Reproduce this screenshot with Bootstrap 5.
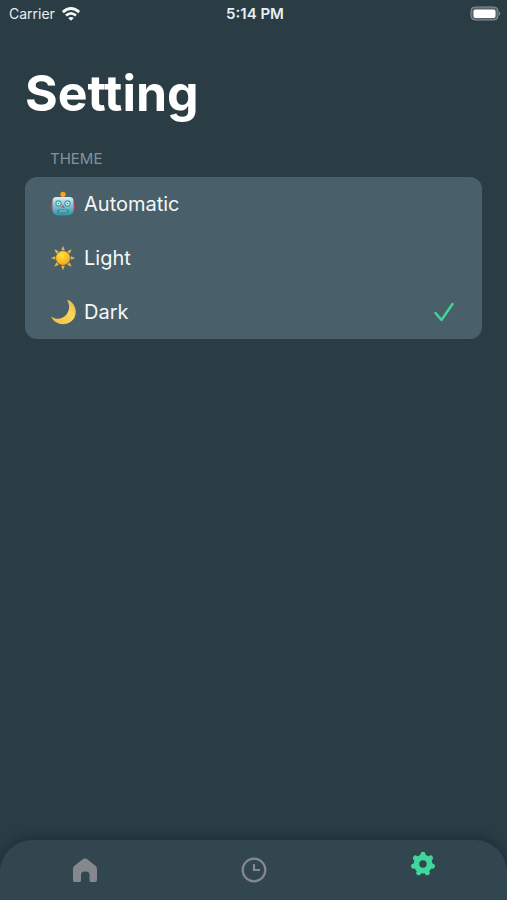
<!DOCTYPE html>
<html lang="en">
<head>
<meta charset="utf-8">
<meta name="viewport" content="width=device-width, initial-scale=1">
<title>Setting</title>
<link href="https://cdn.jsdelivr.net/npm/bootstrap@5.3.0/dist/css/bootstrap.min.css" rel="stylesheet">
<style>
body { background: #2a3d45; color: #fff; font-family: Inter, "Liberation Sans", sans-serif; }
svg { display: block; flex-shrink: 0; }
.status { height: 28px; padding: 0 6px 0 9px; font-size: 14px; line-height: 28px; color: #e9eff1; }
.status > * { flex: 1 1 0; }
.carrier { gap: 6px; }
.clock { font-size: 15px; }
.page-title { font-size: 50px; line-height: 60px; font-weight: 700; margin: 0 0 26px; }
.page-body { padding: 35px 25px 0; }
.group-label { font-size: 15px; line-height: 20px; color: #85939a; padding-left: 25px; margin: 0 0 8px; float: none; }
.options { border-radius: 12px; background: #495f69; }
.option { height: 54px; padding: 0 28px 0 25px; font-size: 20px; color: #f3f7f9; background: transparent; gap: 8px; cursor: pointer; }
.option .tick { visibility: hidden; }
.option input:checked ~ .tick { visibility: visible; }
.tabs { height: 60px; border-radius: 32px 32px 0 0; background: #31464f; box-shadow: 0 -2px 12px rgba(10, 25, 35, .45); }
.tab { color: #85898f; }
.tab.active { color: #41d69b; padding-bottom: 12px; }
</style>
<script src="https://cdn.jsdelivr.net/npm/bootstrap@5.3.0/dist/js/bootstrap.bundle.min.js"></script>
</head>
<body class="d-flex flex-column min-vh-100">
<header class="status d-flex align-items-center">
  <div class="carrier d-flex align-items-center"><span>Carrier</span>
    <svg width="20" height="16" viewBox="0 0 20 16" fill="none" stroke="#f4f8f9" stroke-width="2.8" aria-label="Wi-Fi"><path d="M1.800 6.100Q10-1.200 18.200 6.100M5 9.500q5-4.300 10 0"/><path d="M10 14.700 7.200 12q2.800-2.200 5.600 0Z" fill="#f4f8f9" stroke="none"/></svg>
  </div>
  <div class="clock text-center fw-semibold">5:14 PM</div>
  <div class="d-flex justify-content-end">
    <svg width="31" height="16" viewBox="0 0 31 16" aria-label="Battery full"><rect x="1" y="1" width="27" height="13" rx="4" fill="#57656b" stroke="#849096"/><rect x="3.500" y="3.500" width="22" height="8.500" rx="2" fill="#fff"/><path d="M29 5.200q2.300 2.300 0 4.600Z" fill="#849096"/></svg>
  </div>
</header>
<main class="page-body flex-grow-1">
  <h1 class="page-title">Setting</h1>
  <fieldset>
    <legend class="group-label">THEME</legend>
    <div class="list-group options">
      <label class="list-group-item border-0 option d-flex align-items-center">
        <input class="visually-hidden" type="radio" name="theme" value="automatic">
        <svg width="26" height="26" viewBox="0 0 26 26"><defs><linearGradient id="face" x1="0" y1="0" x2="0" y2="1"><stop stop-color="#d9f1f2"/><stop offset=".5" stop-color="#78c4d0"/><stop offset="1" stop-color="#2c91a5"/></linearGradient></defs><rect x=".8" y="11" width="4" height="9" rx="2" fill="#b8405a"/><rect x="21.200" y="11" width="4" height="9" rx="2" fill="#b8405a"/><path d="M2 8v6M24 8v6" stroke="#8b4164" stroke-width="1.200"/><path d="M10.500 5h5l1.300 3H9.200Z" fill="#6f4d61"/><circle cx="13" cy="3.300" r="2.600" fill="#f5a51d"/><path d="M6.500 6h13q4 0 4 4v8q0 6.500-5.500 6.500H8Q2.500 24.500 2.500 18v-8q0-4 4-4Z" fill="url(#face)"/><circle cx="8.500" cy="12.500" r="3.200" fill="#419cb2"/><circle cx="17.500" cy="12.500" r="3.200" fill="#419cb2"/><circle cx="8.500" cy="12.500" r="2" fill="#d4eee9"/><circle cx="17.500" cy="12.500" r="2" fill="#d4eee9"/><circle cx="8.500" cy="12.500" r=".8" fill="#a95148"/><circle cx="17.500" cy="12.500" r=".8" fill="#a95148"/><path d="m13 13.500 1.800 3.300h-3.600Z" fill="#c45951"/><rect x="7.500" y="18.500" width="11" height="3" rx="1.500" fill="#34798b"/><path d="M9 20h8" stroke="#b6dcdf"/></svg>
        <span class="flex-grow-1">Automatic</span>
        <svg class="tick" width="20" height="20" viewBox="0 0 20 20" fill="none" stroke="#41d69b" stroke-width="2.400" stroke-linecap="round" stroke-linejoin="round"><path d="m1.500 11 6 7L18.500 2"/></svg>
      </label>
      <label class="list-group-item border-0 option d-flex align-items-center">
        <input class="visually-hidden" type="radio" name="theme" value="light">
        <svg width="26" height="26" viewBox="0 0 26 26"><defs><radialGradient id="sun" cx=".4" cy=".3" r=".7"><stop stop-color="#ffe23d"/><stop offset="1" stop-color="#f6a719"/></radialGradient><path id="ray" d="m13 .8 1.800 4.500h-3.600Z" fill="#eab34b"/></defs><use href="#ray"/><use href="#ray" transform="rotate(45 13 13)"/><use href="#ray" transform="rotate(90 13 13)"/><use href="#ray" transform="rotate(135 13 13)"/><use href="#ray" transform="rotate(180 13 13)"/><use href="#ray" transform="rotate(225 13 13)"/><use href="#ray" transform="rotate(270 13 13)"/><use href="#ray" transform="rotate(315 13 13)"/><circle cx="13" cy="13" r="7" fill="url(#sun)"/></svg>
        <span class="flex-grow-1">Light</span>
        <svg class="tick" width="20" height="20" viewBox="0 0 20 20" fill="none" stroke="#41d69b" stroke-width="2.400" stroke-linecap="round" stroke-linejoin="round"><path d="m1.500 11 6 7L18.500 2"/></svg>
      </label>
      <label class="list-group-item border-0 option d-flex align-items-center">
        <input class="visually-hidden" type="radio" name="theme" value="dark" checked>
        <svg width="26" height="26" viewBox="0 0 26 26"><defs><linearGradient id="moon" x1="0" y1="1" x2="1" y2="0"><stop stop-color="#eebd42"/><stop offset=".6" stop-color="#f8d85d"/><stop offset="1" stop-color="#e2b347"/></linearGradient></defs><path d="M17 .700C25 3 27.500 12 24.500 18.500 20 27 6 28 1 17.500 7 21.500 13 19.800 16.500 15.500 20 11 19.800 5 17 .700Z" fill="url(#moon)"/></svg>
        <span class="flex-grow-1">Dark</span>
        <svg class="tick" width="20" height="20" viewBox="0 0 20 20" fill="none" stroke="#41d69b" stroke-width="2.400" stroke-linecap="round" stroke-linejoin="round"><path d="m1.500 11 6 7L18.500 2"/></svg>
      </label>
    </div>
  </fieldset>
</main>
<nav class="tabs row g-0" aria-label="Main">
  <a href="#home" class="tab col d-flex align-items-center justify-content-center" aria-label="Home"><svg width="26" height="26" viewBox="0 0 26 26" fill="currentColor"><path d="M11.500 1.800q1.500-1.200 3 0l8.700 6.700q1.800 1.400 1.800 3.500v11q0 2-2 2h-4q-1.500 0-1.500-1.500V18q0-3.500-3.500-3.500h-1.500Q9 14.500 9 18v5.500Q9 25 7.500 25H3q-2 0-2-2V12q0-2.100 1.800-3.500Z"/></svg></a>
  <a href="#history" class="tab col d-flex align-items-center justify-content-center" aria-label="History"><svg width="26" height="26" viewBox="0 0 26 26" fill="none" stroke="currentColor" stroke-width="2.200"><circle cx="13" cy="13" r="11.300"/><path d="M13 7v6h6"/></svg></a>
  <a href="#setting" class="tab active col d-flex align-items-center justify-content-center" aria-label="Setting" aria-current="page"><svg width="26" height="26" viewBox="0 0 26 26" fill="none" stroke="currentColor"><defs><path id="tooth" d="M13 6V3.300" stroke-width="5" stroke-linecap="round"/></defs><circle cx="13" cy="13" r="6.600" stroke-width="5.800"/><use href="#tooth"/><use href="#tooth" transform="rotate(51.430 13 13)"/><use href="#tooth" transform="rotate(102.860 13 13)"/><use href="#tooth" transform="rotate(154.290 13 13)"/><use href="#tooth" transform="rotate(205.710 13 13)"/><use href="#tooth" transform="rotate(257.140 13 13)"/><use href="#tooth" transform="rotate(308.570 13 13)"/></svg></a>
</nav>
</body>
</html>
